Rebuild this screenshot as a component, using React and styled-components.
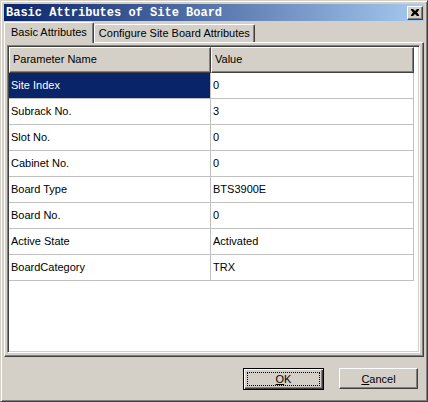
import React from 'react';
import styled, { createGlobalStyle } from 'styled-components';

const GlobalStyle = createGlobalStyle`
  html, body {
    margin: 0;
    padding: 0;
    background: #d4d0c8;
  }
  body {
    font-family: "Liberation Sans", Arial, sans-serif;
    font-size: 11px;
    color: #000;
  }
`

const Window = styled.div`
  width: 428px;
  height: 402px;
  box-sizing: border-box;
  background: #d4d0c8;
  border: 1px solid;
  border-color: #d4d0c8 #404040 #404040 #d4d0c8;
  box-shadow: inset 1px 1px #fff, inset -1px -1px #808080;
  padding: 3px 3px 2px 3px;
  display: flex;
  flex-direction: column;
`

const TitleBar = styled.div`
  height: 17px;
  flex: none;
  display: flex;
  align-items: center;
  justify-content: space-between;
  padding: 0 1px 0 2px;
  background: linear-gradient(to right, #0a246a, #a6caf0);
`

const TitleText = styled.span`
  font-family: "Liberation Mono", "Courier New", monospace;
  font-weight: bold;
  font-size: 12px;
  color: #fff;
  white-space: nowrap;
`

const CloseButton = styled.div`
  width: 16px;
  height: 14px;
  box-sizing: border-box;
  background: #d4d0c8;
  border: 1px solid;
  border-color: #fff #404040 #404040 #fff;
  box-shadow: inset -1px -1px #808080;
  display: flex;
  align-items: center;
  justify-content: center;
`

const TabStrip = styled.div`
  flex: none;
  height: 21px;
  display: flex;
  align-items: flex-end;
`

const Tab = styled.div`
  box-sizing: border-box;
  height: ${p => (p.$active ? '21px' : '18px')};
  padding: 0 ${p => (p.$active ? '6px' : '4px')} ${p => (p.$active ? '2px' : '1px')};
  display: flex;
  align-items: center;
  border-top: 1px solid #fff;
  border-left: 1px solid #fff;
  border-right: 1px solid #404040;
  box-shadow: inset -1px 0 #808080;
  border-radius: 2px 2px 0 0;
  position: relative;
  z-index: ${p => (p.$active ? 1 : 0)};
  margin-bottom: ${p => (p.$active ? '-1px' : '0')};
  background: #d4d0c8;
  white-space: nowrap;
`

const Panel = styled.div`
  flex: 1;
  min-height: 0;
  box-sizing: border-box;
  border: 1px solid;
  border-color: #fff #404040 #404040 #fff;
  box-shadow: inset -1px -1px #808080;
  padding: 2px 3px 3px 2px;
  display: flex;
`

const Grid = styled.div`
  flex: 1;
  box-sizing: border-box;
  background: #fff;
  border: 1px solid;
  border-color: #808080 #fff #fff #808080;
  box-shadow: inset 1px 1px #404040, inset -1px -1px #d4d0c8;
  padding: 1px 2px 2px 1px;
`

const Row = styled.div`
  display: grid;
  grid-template-columns: 202px 203px;
`

const HeadCell = styled.div`
  box-sizing: border-box;
  height: 26px;
  padding: 0 3px 2px;
  display: flex;
  align-items: center;
  background: #d4d0c8;
  border-top: 1px solid #fff;
  border-left: 1px solid #fff;
  border-right: 1px solid #404040;
  border-bottom: 1px solid #404040;
  box-shadow: inset -1px -1px #808080;
`

const Cell = styled.div`
  box-sizing: border-box;
  height: 26px;
  padding: 0 3px 2px 2px;
  display: flex;
  align-items: center;
  border-right: 1px solid #c0c0c0;
  border-bottom: 1px solid #c0c0c0;
  background: ${p => (p.$selected ? '#0a246a' : '#fff')};
  color: ${p => (p.$selected ? '#fff' : '#000')};
`

const ButtonBar = styled.div`
  flex: none;
  height: 41px;
  display: flex;
  justify-content: flex-end;
  align-items: center;
  gap: 15px;
  padding-right: 6px;
  padding-top: 1px;
`

const Button = styled.div`
  width: ${p => (p.$default ? '81px' : '79px')};
  height: ${p => (p.$default ? '22px' : '21px')};
  box-sizing: border-box;
  background: #d4d0c8;
  border: 1px solid;
  border-color: ${p => (p.$default ? '#000' : '#fff #404040 #404040 #fff')};
  box-shadow: ${p =>
    p.$default
      ? 'inset 1px 1px #fff, inset -1px -1px #404040, inset -2px -2px #808080'
      : 'inset -1px -1px #808080'};
  display: flex;
  align-items: center;
  justify-content: center;
  padding: 3px;
`

const Focus = styled.div`
  flex: 1;
  align-self: stretch;
  display: flex;
  align-items: center;
  justify-content: center;
  border: 1px dotted ${p => (p.$on ? '#000' : 'transparent')};
`

const Key = styled.span`
  text-decoration: underline;
`

const rows = [
  ['Site Index', '0'],
  ['Subrack No.', '3'],
  ['Slot No.', '0'],
  ['Cabinet No.', '0'],
  ['Board Type', 'BTS3900E'],
  ['Board No.', '0'],
  ['Active State', 'Activated'],
  ['BoardCategory', 'TRX'],
]

export default function App() {
  return (
    <>
      <GlobalStyle />
      <Window>
        <TitleBar>
          <TitleText>Basic Attributes of Site Board</TitleText>
          <CloseButton>
            <svg width="8" height="7" viewBox="0 0 8 7">
              <path d="M0 0h2l2 2 2-2h2v1l-2 2.5 2 2.5v1h-2l-2-2-2 2h-2v-1l2-2.5-2-2.5z" fill="#000" />
            </svg>
          </CloseButton>
        </TitleBar>
        <TabStrip>
          <Tab $active>Basic Attributes</Tab>
          <Tab>Configure Site Board Attributes</Tab>
        </TabStrip>
        <Panel>
          <Grid>
            <Row>
              <HeadCell>Parameter Name</HeadCell>
              <HeadCell>Value</HeadCell>
            </Row>
            {rows.map(([name, value], i) => (
              <Row key={name}>
                <Cell $selected={i === 0}>{name}</Cell>
                <Cell>{value}</Cell>
              </Row>
            ))}
          </Grid>
        </Panel>
        <ButtonBar>
          <Button $default>
            <Focus $on>
              <span><Key>O</Key>K</span>
            </Focus>
          </Button>
          <Button>
            <Focus>
              <span><Key>C</Key>ancel</span>
            </Focus>
          </Button>
        </ButtonBar>
      </Window>
    </>
  )
}
